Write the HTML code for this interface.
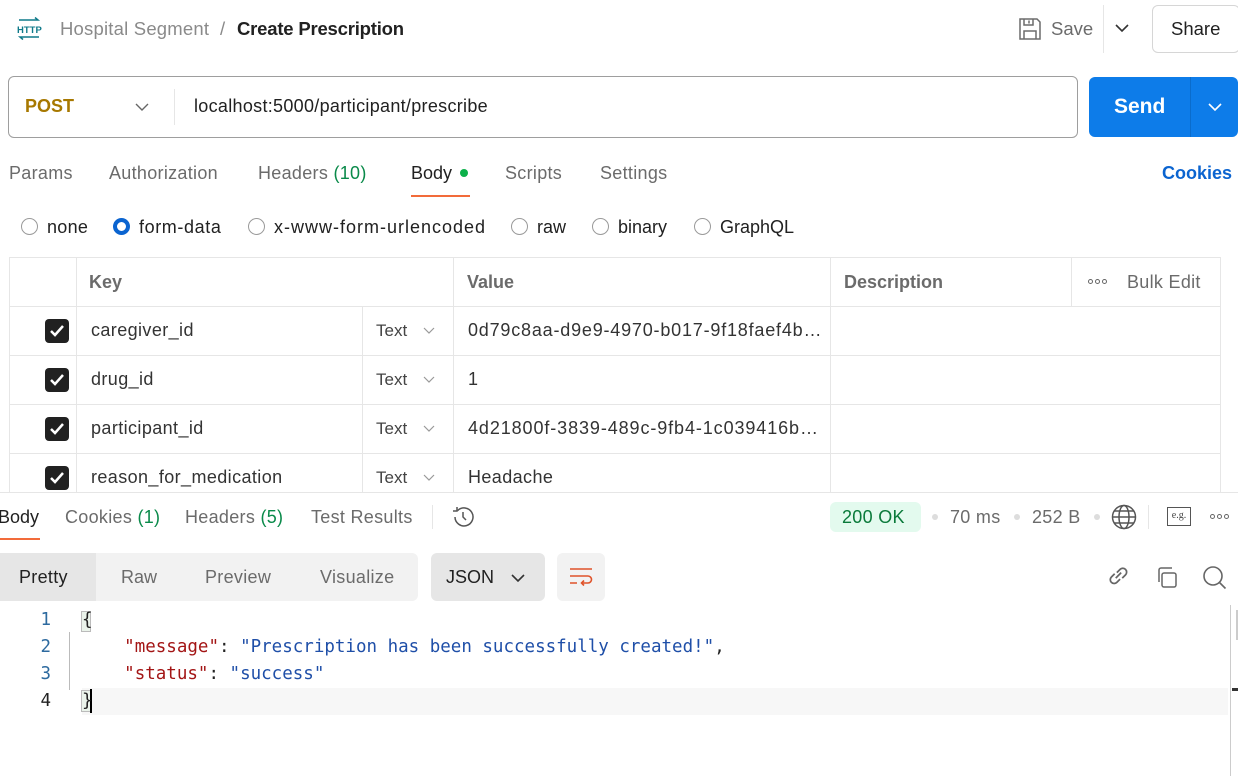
<!DOCTYPE html>
<html><head><meta charset="utf-8"><style>
*{margin:0;padding:0;box-sizing:border-box}
body{width:1238px;height:776px;overflow:hidden;background:#fff;font-family:"Liberation Sans",sans-serif;color:#212121;position:relative;font-size:17px}
.a{position:absolute;white-space:nowrap}
.g{color:#6b6b6b}
.grn{color:#0a8a4a}
.line{position:absolute;background:#e6e6e6}
.cb{position:absolute;width:24px;height:24px;background:#212121;border-radius:4px}
.cb svg{position:absolute;left:3px;top:3px}
.mono{font-family:"DejaVu Sans Mono","Liberation Mono",monospace;font-size:17.5px}
.radio{position:absolute;width:17px;height:17px;border:1.5px solid #9a9a9a;border-radius:50%}
.dots{position:absolute;display:flex;gap:2px}
.dots i{display:block;width:5px;height:5px;border:1.2px solid #666;border-radius:50%}
</style></head><body>
<!-- header -->
<div class="a" style="left:16px;top:17px;width:26px;height:24px">
<svg width="26" height="24" viewBox="0 0 26 24"><path d="M3 3H22l-3-2.5" stroke="#0f7a8a" stroke-width="1.5" fill="none"/><text x="1" y="16" font-size="9.5" font-family="Liberation Sans" fill="#0f7a8a" font-weight="bold">HTTP</text><path d="M23 20H4l3 2.5" stroke="#0f7a8a" stroke-width="1.5" fill="none"/></svg></div>
<div class="a" style="left:60px;top:18px;font-size:18.5px;color:#8a8a8a;letter-spacing:0.2px">Hospital Segment</div>
<div class="a" style="left:220px;top:18px;font-size:18.5px;color:#8a8a8a">/</div>
<div class="a" style="left:237px;top:18px;font-size:18.5px;font-weight:bold;color:#212121;letter-spacing:-0.2px">Create Prescription</div>
<svg class="a" style="left:1018px;top:17px" width="24" height="24" viewBox="0 0 24 24" fill="none" stroke="#6b6b6b" stroke-width="1.5"><path d="M2 2h17l3 3v17H2z"/><path d="M6 2v6h9V2M11 3.5v3"/><path d="M6 22v-8h12v8"/></svg>
<div class="a" style="left:1051px;top:18px;font-size:18.5px;color:#6b6b6b">Save</div>
<div class="line" style="left:1103px;top:5px;width:1px;height:48px"></div>
<svg class="a" style="left:1115px;top:23px" width="14" height="10" viewBox="0 0 14 10"><path d="M1 2l6 6 6-6" stroke="#333" stroke-width="1.6" fill="none"/></svg>
<div class="a" style="left:1152px;top:5px;width:88px;height:48px;border:1px solid #d6d6d6;border-radius:6px"></div>
<div class="a" style="left:1171px;top:18px;font-size:18.5px">Share</div>
<!-- url bar -->
<div class="a" style="left:8px;top:76px;width:1070px;height:62px;border:1px solid #9e9e9e;border-radius:6px"></div>
<div class="a" style="left:25px;top:96px;font-size:18px;font-weight:bold;color:#a77800">POST</div>
<svg class="a" style="left:135px;top:102px" width="14" height="10" viewBox="0 0 14 10"><path d="M1 2l6 6 6-6" stroke="#666" stroke-width="1.4" fill="none"/></svg>
<div class="line" style="left:174px;top:89px;width:1px;height:36px"></div>
<div class="a" style="left:194px;top:96px;font-size:18px;letter-spacing:0.3px">localhost:5000/participant/prescribe</div>
<div class="a" style="left:1089px;top:77px;width:149px;height:60px;background:#0d7ce9;border-radius:6px"></div>
<div class="line" style="left:1190px;top:77px;width:1px;height:60px;background:#0a6ccc"></div>
<div class="a" style="left:1114px;top:95px;font-size:21px;font-weight:bold;color:#fff">Send</div>
<svg class="a" style="left:1208px;top:102px" width="14" height="10" viewBox="0 0 14 10"><path d="M1 2l6 6 6-6" stroke="#fff" stroke-width="1.6" fill="none"/></svg>
<!-- tabs -->
<div class="a g" style="left:9px;top:163px;font-size:18px;letter-spacing:0.3px">Params</div>
<div class="a g" style="left:109px;top:163px;font-size:18px;letter-spacing:0.3px">Authorization</div>
<div class="a g" style="left:258px;top:163px;font-size:18px;letter-spacing:0.3px">Headers <span class="grn">(10)</span></div>
<div class="a" style="left:411px;top:163px;font-size:18px">Body</div>
<div class="a" style="left:460px;top:169px;width:8px;height:8px;border-radius:50%;background:#0cb04a"></div>
<div class="a" style="left:411px;top:195px;width:59px;height:2px;background:#f26b3a"></div>
<div class="a g" style="left:505px;top:163px;font-size:18px;letter-spacing:0.3px">Scripts</div>
<div class="a g" style="left:600px;top:163px;font-size:18px;letter-spacing:0.3px">Settings</div>
<div class="a" style="left:1162px;top:163px;font-size:18px;font-weight:bold;color:#0b64d0">Cookies</div>
<!-- radios -->
<div class="radio" style="left:21px;top:218px"></div><div class="a" style="left:47px;top:217px;font-size:18px;letter-spacing:0.3px">none</div>
<div class="radio" style="left:113px;top:218px;border:4.5px solid #0b64d0"></div><div class="a" style="left:139px;top:217px;font-size:18px;letter-spacing:0.6px">form-data</div>
<div class="radio" style="left:248px;top:218px"></div><div class="a" style="left:274px;top:217px;font-size:18px;letter-spacing:1px">x-www-form-urlencoded</div>
<div class="radio" style="left:511px;top:218px"></div><div class="a" style="left:537px;top:217px;font-size:18px">raw</div>
<div class="radio" style="left:592px;top:218px"></div><div class="a" style="left:618px;top:217px;font-size:18px">binary</div>
<div class="radio" style="left:694px;top:218px"></div><div class="a" style="left:720px;top:217px;font-size:18px">GraphQL</div>
<!-- table -->
<div class="line" style="left:9px;top:257px;width:1212px;height:1px"></div>
<div class="line" style="left:9px;top:306px;width:1212px;height:1px"></div>
<div class="line" style="left:9px;top:355px;width:1212px;height:1px"></div>
<div class="line" style="left:9px;top:404px;width:1212px;height:1px"></div>
<div class="line" style="left:9px;top:453px;width:1212px;height:1px"></div>
<div class="line" style="left:9px;top:257px;width:1px;height:235px"></div>
<div class="line" style="left:76px;top:257px;width:1px;height:235px"></div>
<div class="line" style="left:362px;top:306px;width:1px;height:186px"></div>
<div class="line" style="left:453px;top:257px;width:1px;height:235px"></div>
<div class="line" style="left:830px;top:257px;width:1px;height:235px"></div>
<div class="line" style="left:1071px;top:257px;width:1px;height:49px"></div>
<div class="line" style="left:1220px;top:257px;width:1px;height:235px"></div>
<div class="a" style="left:89px;top:272px;font-size:18px;font-weight:bold;color:#6b6b6b">Key</div>
<div class="a" style="left:467px;top:272px;font-size:18px;font-weight:bold;color:#6b6b6b">Value</div>
<div class="a" style="left:844px;top:272px;font-size:18px;font-weight:bold;color:#6b6b6b">Description</div>
<div class="dots" style="left:1088px;top:279px"><i></i><i></i><i></i></div>
<div class="a g" style="left:1127px;top:272px;font-size:18px;letter-spacing:0.3px">Bulk Edit</div>
<!-- rows -->
<div class="cb" style="left:45px;top:319px"><svg width="18" height="18" viewBox="0 0 18 18"><path d="M3 9l4 4 8-9" stroke="#fff" stroke-width="2.5" fill="none"/></svg></div>
<div class="a" style="left:91px;top:320px;font-size:18px;color:#333;letter-spacing:0.4px">caregiver_id</div>
<div class="a" style="left:376px;top:321px;font-size:17px;color:#444">Text</div>
<svg class="a" style="left:423px;top:327px" width="12" height="8" viewBox="0 0 12 8"><path d="M1 1l5 5 5-5" stroke="#999" stroke-width="1.2" fill="none"/></svg>
<div class="a" style="left:468px;top:320px;font-size:18px;color:#333;letter-spacing:0.8px">0d79c8aa-d9e9-4970-b017-9f18faef4b…</div>

<div class="cb" style="left:45px;top:368px"><svg width="18" height="18" viewBox="0 0 18 18"><path d="M3 9l4 4 8-9" stroke="#fff" stroke-width="2.5" fill="none"/></svg></div>
<div class="a" style="left:91px;top:369px;font-size:18px;color:#333;letter-spacing:0.4px">drug_id</div>
<div class="a" style="left:376px;top:370px;font-size:17px;color:#444">Text</div>
<svg class="a" style="left:423px;top:376px" width="12" height="8" viewBox="0 0 12 8"><path d="M1 1l5 5 5-5" stroke="#999" stroke-width="1.2" fill="none"/></svg>
<div class="a" style="left:468px;top:369px;font-size:18px;color:#333">1</div>

<div class="cb" style="left:45px;top:417px"><svg width="18" height="18" viewBox="0 0 18 18"><path d="M3 9l4 4 8-9" stroke="#fff" stroke-width="2.5" fill="none"/></svg></div>
<div class="a" style="left:91px;top:418px;font-size:18px;color:#333;letter-spacing:0.4px">participant_id</div>
<div class="a" style="left:376px;top:419px;font-size:17px;color:#444">Text</div>
<svg class="a" style="left:423px;top:425px" width="12" height="8" viewBox="0 0 12 8"><path d="M1 1l5 5 5-5" stroke="#999" stroke-width="1.2" fill="none"/></svg>
<div class="a" style="left:468px;top:418px;font-size:18px;color:#333;letter-spacing:0.9px">4d21800f-3839-489c-9fb4-1c039416b…</div>

<div class="cb" style="left:45px;top:466px"><svg width="18" height="18" viewBox="0 0 18 18"><path d="M3 9l4 4 8-9" stroke="#fff" stroke-width="2.5" fill="none"/></svg></div>
<div class="a" style="left:91px;top:467px;font-size:18px;color:#333;letter-spacing:0.4px">reason_for_medication</div>
<div class="a" style="left:376px;top:468px;font-size:17px;color:#444">Text</div>
<svg class="a" style="left:423px;top:474px" width="12" height="8" viewBox="0 0 12 8"><path d="M1 1l5 5 5-5" stroke="#999" stroke-width="1.2" fill="none"/></svg>
<div class="a" style="left:468px;top:467px;font-size:18px;color:#333;letter-spacing:0.4px">Headache</div>
<!-- response pane -->
<div class="a" style="left:0;top:492px;width:1238px;height:284px;background:#fff;border-top:1px solid #e6e6e6"></div>
<div class="a" style="left:-2px;top:507px;font-size:18px">Body</div>
<div class="a" style="left:0;top:538px;width:40px;height:2px;background:#f26b3a"></div>
<div class="a g" style="left:65px;top:507px;font-size:18px;letter-spacing:0.3px">Cookies <span class="grn">(1)</span></div>
<div class="a g" style="left:185px;top:507px;font-size:18px;letter-spacing:0.3px">Headers <span class="grn">(5)</span></div>
<div class="a g" style="left:311px;top:507px;font-size:18px;letter-spacing:0.3px">Test Results</div>
<div class="line" style="left:432px;top:505px;width:1px;height:24px"></div>
<svg class="a" style="left:451px;top:505px" width="24" height="24" viewBox="0 0 24 24" fill="none" stroke="#555" stroke-width="1.5"><path d="M4 12a9 9 0 1 0 2.6-6.4"/><path d="M6 2v4h-4" /><path d="M12 7v5l3 3"/></svg>
<div class="a" style="left:830px;top:502px;width:91px;height:30px;background:#e3faee;border-radius:6px"></div>
<div class="a" style="left:842px;top:507px;font-size:18px;color:#0a7a3a;letter-spacing:0.3px">200 OK</div>
<div class="a" style="left:932px;top:514px;width:6px;height:6px;border-radius:50%;background:#ddd"></div>
<div class="a g" style="left:950px;top:507px;font-size:18px;letter-spacing:0.3px">70 ms</div>
<div class="a" style="left:1014px;top:514px;width:6px;height:6px;border-radius:50%;background:#ddd"></div>
<div class="a g" style="left:1032px;top:507px;font-size:18px;letter-spacing:0.3px">252 B</div>
<div class="a" style="left:1094px;top:514px;width:6px;height:6px;border-radius:50%;background:#ddd"></div>
<svg class="a" style="left:1111px;top:504px" width="26" height="26" viewBox="0 0 26 26" fill="none" stroke="#555" stroke-width="1.5"><circle cx="13" cy="13" r="11.5"/><ellipse cx="13" cy="13" rx="5" ry="11.5"/><path d="M1.5 13h23M3.5 7h19M3.5 19h19"/></svg>
<div class="line" style="left:1148px;top:505px;width:1px;height:24px"></div>
<div class="a" style="left:1167px;top:507px;width:24px;height:19px;border:1.5px solid #555;font-size:10px;color:#444;text-align:center;line-height:15px;font-family:'Liberation Serif',serif">e.g.</div>
<div class="dots" style="left:1210px;top:514px"><i></i><i></i><i></i></div>
<!-- toolbar -->
<div class="a" style="left:0;top:553px;width:418px;height:48px;background:#f2f2f2;border-radius:6px"></div>
<div class="a" style="left:0;top:553px;width:96px;height:48px;background:#e6e6e6"></div>
<div class="a" style="left:19px;top:567px;font-size:18px;letter-spacing:0.3px">Pretty</div>
<div class="a g" style="left:121px;top:567px;font-size:18px">Raw</div>
<div class="a g" style="left:205px;top:567px;font-size:18px;letter-spacing:0.3px">Preview</div>
<div class="a g" style="left:320px;top:567px;font-size:18px;letter-spacing:0.3px">Visualize</div>
<div class="a" style="left:431px;top:553px;width:114px;height:48px;background:#e6e6e6;border-radius:6px"></div>
<div class="a" style="left:446px;top:567px;font-size:18px">JSON</div>
<svg class="a" style="left:511px;top:573px" width="14" height="10" viewBox="0 0 14 10"><path d="M1 2l6 6 6-6" stroke="#333" stroke-width="1.6" fill="none"/></svg>
<div class="a" style="left:557px;top:553px;width:48px;height:48px;background:#f2f2f2;border-radius:6px"></div>
<svg class="a" style="left:568px;top:566px" width="26" height="22" viewBox="0 0 26 22" fill="none" stroke="#e0532a" stroke-width="1.6"><path d="M2 3h22M2 10h18a3.5 3.5 0 0 1 0 7h-6M2 17h7"/><path d="M16 14.5l-2.5 2.5 2.5 2.5"/></svg>
<svg class="a" style="left:1106px;top:564px" width="26" height="26" viewBox="0 0 24 24" fill="none" stroke="#666" stroke-width="1.6"><path d="M10 8l3-3a3.5 3.5 0 0 1 5 5l-3 3"/><path d="M13 14l-3 3a3.5 3.5 0 0 1-5-5l3-3"/><path d="M9 13l5-5"/></svg>
<svg class="a" style="left:1155px;top:566px" width="24" height="24" viewBox="0 0 24 24" fill="none" stroke="#666" stroke-width="1.5"><rect x="7" y="7" width="14" height="14" rx="2"/><path d="M4 16V4a2 2 0 0 1 2-2h11"/></svg>
<svg class="a" style="left:1202px;top:565px" width="26" height="26" viewBox="0 0 26 26" fill="none" stroke="#666" stroke-width="1.6"><circle cx="11" cy="11" r="9"/><path d="M17.5 17.5l6 6"/></svg>
<!-- code -->
<div class="a" style="left:82px;top:688px;width:1146px;height:27px;background:#f7f7f7"></div>
<div class="a" style="left:1230px;top:605px;width:1px;height:171px;background:#ccc"></div>
<div class="a" style="left:1232px;top:688px;width:6px;height:3px;background:#333"></div>
<div class="a" style="left:1236px;top:610px;width:2px;height:30px;background:#ccc"></div>
<div class="a" style="left:69px;top:632px;width:1px;height:58px;background:#bbb"></div>
<div class="a mono" style="left:39px;top:607px;color:#2d6a9f;line-height:27px;text-align:right;width:12px">1<br>2<br>3<br><span style="color:#222">4</span></div>
<div class="a" style="left:81px;top:611px;width:10px;height:21px;background:#eaf3ea;border:1px solid #bbb"></div>
<div class="a" style="left:81px;top:690px;width:10px;height:22px;background:#eaf3ea;border:1px solid #bbb"></div>
<div class="a" style="left:90px;top:689px;width:2px;height:24px;background:#000"></div>
<div class="a mono" style="left:82px;top:607px;line-height:27px;color:#222">{<br>&nbsp;&nbsp;&nbsp;&nbsp;<span style="color:#a31515">"message"</span>: <span style="color:#1f4fa8">"Prescription has been successfully created!"</span>,<br>&nbsp;&nbsp;&nbsp;&nbsp;<span style="color:#a31515">"status"</span>: <span style="color:#1f4fa8">"success"</span><br>}</div>
</body></html>
